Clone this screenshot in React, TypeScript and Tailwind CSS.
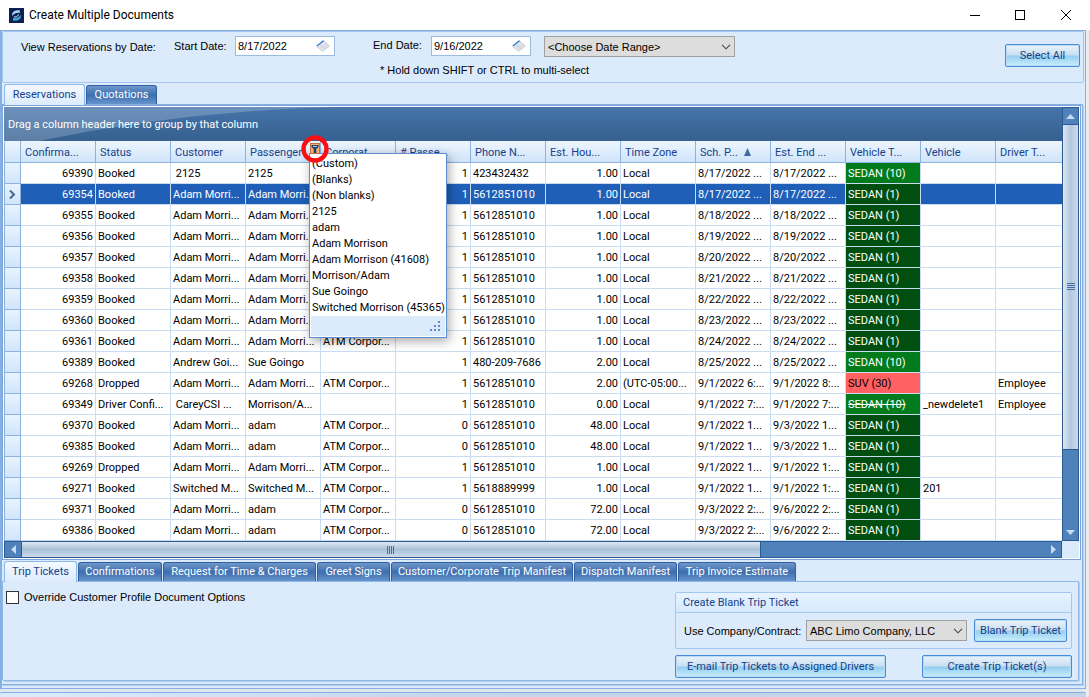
import type { ReactNode } from "react";

type Row = {
  conf: string;
  status: string;
  customer: string;
  passenger: string;
  corporate: string;
  pax: string;
  phone: string;
  hours: string;
  zone: string;
  pickup: string;
  end: string;
  type: string;
  vehicle?: string;
  driver?: string;
  strike?: boolean;
};

const ADAM = "Adam Morri...";
const ATM = "ATM Corpor...";

function row(
  conf: string,
  status: string,
  customer: string,
  passenger: string,
  corporate: string,
  pax: string,
  phone: string,
  hours: string,
  pickup: string,
  end: string,
  type: string,
  extra: Partial<Row> = {},
): Row {
  return { conf, status, customer, passenger, corporate, pax, phone, hours, zone: "Local", pickup, end, type, ...extra };
}

const daily = (conf: string, day: string, corporate = "") =>
  row(conf, "Booked", ADAM, ADAM, corporate, "1", "5612851010", "1.00", `8/${day}/2022 ...`, `8/${day}/2022 ...`, "SEDAN (1)");

const ROWS: Row[] = [
  row("69390", "Booked", "\u00a02125", "2125", "", "1", "423432432", "1.00", "8/17/2022 ...", "8/17/2022 ...", "SEDAN (10)"),
  daily("69354", "17"),
  daily("69355", "18"),
  daily("69356", "19"),
  daily("69357", "20"),
  daily("69358", "21"),
  daily("69359", "22"),
  daily("69360", "23"),
  daily("69361", "24", ATM),
  row("69389", "Booked", "Andrew Goi...", "Sue Goingo", "", "1", "480-209-7686", "2.00", "8/25/2022 ...", "8/25/2022 ...", "SEDAN (10)"),
  row("69268", "Dropped", ADAM, ADAM, ATM, "1", "5612851010", "2.00", "9/1/2022 6:...", "9/1/2022 8:...", "SUV (30)", { zone: "(UTC-05:00...", driver: "Employee" }),
  row("69349", "Driver Confi...", "\u00a0CareyCSI ...", "Morrison/A...", "", "1", "5612851010", "0.00", "9/1/2022 7:...", "9/1/2022 7:...", "SEDAN (10)", { vehicle: "_newdelete1", driver: "Employee", strike: true }),
  row("69370", "Booked", ADAM, "adam", ATM, "0", "5612851010", "48.00", "9/1/2022 1...", "9/3/2022 1...", "SEDAN (1)"),
  row("69385", "Booked", ADAM, "adam", ATM, "0", "5612851010", "48.00", "9/1/2022 1...", "9/3/2022 1...", "SEDAN (1)"),
  row("69269", "Dropped", ADAM, ADAM, ATM, "1", "5612851010", "1.00", "9/1/2022 1...", "9/1/2022 1:...", "SEDAN (1)"),
  row("69271", "Booked", "Switched M...", "Switched M...", ATM, "1", "5618889999", "1.00", "9/1/2022 1...", "9/1/2022 1:...", "SEDAN (1)", { vehicle: "201" }),
  row("69371", "Booked", ADAM, "adam", ATM, "0", "5612851010", "72.00", "9/3/2022 2:...", "9/6/2022 2:...", "SEDAN (1)"),
  row("69386", "Booked", ADAM, "adam", ATM, "0", "5612851010", "72.00", "9/3/2022 2:...", "9/6/2022 2:...", "SEDAN (1)"),
];

const TYPE_COLORS: Record<string, string> = {
  "SEDAN (10)": "bg-[#027b1d] text-white",
  "SEDAN (1)": "bg-[#004f10] text-white",
  "SUV (30)": "bg-[#ff6163] text-black",
};

const HEADERS = [
  "Confirma...", "Status", "Customer", "Passenger", "Corporat...", "# Passe...", "Phone N...", "Est. Hou...",
  "Time Zone", "Sch. P...", "Est. End ...", "Vehicle T...", "Vehicle", "Driver T...",
];

const FILTERS = [
  "(Custom)", "(Blanks)", "(Non blanks)", "2125", "adam", "Adam Morrison", "Adam Morrison (41608)",
  "Morrison/Adam", "Sue Goingo", "Switched Morrison (45365)",
];

const DOC_TABS = [
  { label: "Confirmations", width: "w-[84px]" },
  { label: "Request for Time & Charges", width: "w-[153px]" },
  { label: "Greet Signs", width: "w-[73px]" },
  { label: "Customer/Corporate Trip Manifest", width: "w-[182px]" },
  { label: "Dispatch Manifest", width: "w-[103px]" },
  { label: "Trip Invoice Estimate", width: "w-[118px]" },
];

function Tab({ active, width, children }: { active?: boolean; width: string; children: ReactNode }) {
  return (
    <button
      role="tab"
      aria-selected={!!active}
      className={`${width} shrink-0 rounded-t-[3px] border border-b-0 text-center whitespace-nowrap ${
        active
          ? "relative z-10 -mb-px h-[21px] border-[#8db8ea] bg-linear-to-b from-[#f4f9ff] to-[#dcebfc] text-[#15428b]"
          : "h-[19px] border-[#2f5f9f] bg-linear-to-b from-[#6f97ca] via-[#3e6fae] to-[#6593cc] text-white"
      }`}
    >
      {children}
    </button>
  );
}

function GlossButton({ width, children }: { width: string; children: ReactNode }) {
  return (
    <button
      className={`${width} h-[23px] shrink-0 rounded-[2px] border border-[#4a8ad4] text-center whitespace-nowrap text-[#15428b] shadow-[inset_0_0_0_1px_#b9dcf8] bg-[linear-gradient(#eaf3fb_0%,#c9dff0_48%,#94cdf0_52%,#c8effc_100%)]`}
    >
      {children}
    </button>
  );
}

function DateBox({ id, value }: { id: string; value: string }) {
  return (
    <div className="relative w-[100px] shrink-0">
      <input id={id} defaultValue={value} className="h-5 w-full border border-[#9dbbe0] bg-white px-0.5 pr-6 text-black outline-none" />
      <svg width="16" height="14" viewBox="0 0 16 14" className="pointer-events-none absolute top-[3px] right-1">
        <path d="M2 7.5 L9 2 L14.5 7 L7.5 12.5 Z" fill="#e4e7ec" stroke="#b4b9c3" strokeWidth=".6" />
        <path d="M5 9 L11.5 4.5 M7 10.5 L13 6 M5 6 L11 10" stroke="#c2c7d0" strokeWidth=".6" />
        <path d="M1.2 6.8 L8 1.2 L9.2 2 L2.2 7.6 Z" fill="#2f7be0" />
      </svg>
    </div>
  );
}

function ComboBox({ id, label, value, width }: { id: string; label?: string; value: string; width: string }) {
  return (
    <div className={`relative shrink-0 ${width}`}>
      <select id={id} aria-label={label} className="h-[21px] w-full appearance-none border border-[#a0a0a0] bg-[#dddddd] px-[3px] text-black outline-none">
        <option>{value}</option>
      </select>
      <svg width="10" height="6" viewBox="0 0 10 6" className="pointer-events-none absolute top-2 right-1" fill="none" stroke="#444" strokeWidth="1.1">
        <path d="M1 .8 L5 4.8 L9 .8" />
      </svg>
    </div>
  );
}

function TitleBar() {
  return (
    <header className="flex h-[30px] items-center bg-white pl-[9px] font-[Roboto,sans-serif] text-xs text-black">
      <svg width="15" height="15" viewBox="0 0 15 15" className="mr-[5px]">
        <rect width="15" height="15" fill="#0d1f55" />
        <path d="M10.8 2.4 C6 1.2 2 4.5 3.5 8 C4.5 6 7 4.3 10.8 5 Z" fill="#a9dcf0" />
        <path d="M4 12.4 C9 14 13.2 10.5 11.5 6.8 C10.4 9.2 8 10.6 4 9.8 Z" fill="#36a5cf" />
        <path d="M5 8.8 C6.5 9.4 8.8 8.6 9.6 6.4" stroke="#e9f8ff" fill="none" />
      </svg>
      <h1 className="flex-1">Create Multiple Documents</h1>
      <div className="flex pr-px">
        <button aria-label="Minimize" className="flex h-[30px] w-[45px] items-center justify-center">
          <svg width="10" height="10" stroke="#000"><path d="M0 5.5 H10" /></svg>
        </button>
        <button aria-label="Maximize" className="flex h-[30px] w-[46px] items-center justify-center">
          <svg width="10" height="10" fill="none" stroke="#000"><rect x=".5" y=".5" width="9" height="9" /></svg>
        </button>
        <button aria-label="Close" className="flex h-[30px] w-[46px] items-center justify-center">
          <svg width="10" height="10" stroke="#000"><path d="M0 0 L10 10 M10 0 L0 10" /></svg>
        </button>
      </div>
    </header>
  );
}

function FilterMenu() {
  return (
    <>
      <div className="absolute top-3 left-[63px] z-20 w-[138px] border border-[#5b8fcf] bg-white p-px text-black shadow-[2px_3px_10px_rgba(0,0,0,0.35)]">
        <ul className="pt-px pl-px">
          {FILTERS.map((f) => (
            <li key={f} className="h-4 leading-4 whitespace-nowrap">{f}</li>
          ))}
        </ul>
        <div className="flex h-5 items-end justify-end bg-[#dcebfc] pr-1 pb-1">
          <svg width="11" height="11" fill="#5b8ccb">
            <rect x="8" y="0" width="2" height="2" />
            <rect x="4" y="4" width="2" height="2" />
            <rect x="8" y="4" width="2" height="2" />
            <rect x="0" y="8" width="2" height="2" />
            <rect x="4" y="8" width="2" height="2" />
            <rect x="8" y="8" width="2" height="2" />
          </svg>
        </div>
      </div>
      <button aria-label="Filter passenger" className="absolute -top-[7px] left-[54px] z-30">
        <svg width="30" height="30" viewBox="0 0 30 30" fill="none">
          <rect x="10.5" y="9.5" width="9" height="10" fill="#f6b066" stroke="#c0703a" />
          <path d="M11.5 11 H18.5 V13 L16.3 15 V19 H13.7 V15 L11.5 13 Z" fill="#1e3f7d" />
          <path d="M13 12.4 H17" stroke="#b9d2f2" />
          <circle cx="15" cy="15" r="11.5" stroke="#fb0f14" strokeWidth="4.4" />
        </svg>
      </button>
    </>
  );
}

function Grid() {
  const cell = "overflow-hidden border-r border-b border-[#c9dcf1] px-[2px] pt-[2px] whitespace-nowrap";
  return (
    <table className="w-full table-fixed border-separate border-spacing-0 bg-white text-left">
      <colgroup>
        <col className="w-[17px]" />
        {HEADERS.map((h, i) => (
          <col key={h} className={i < HEADERS.length - 1 ? "w-[75px]" : ""} />
        ))}
      </colgroup>
      <thead>
        <tr className="h-[22px] text-[#15428b]">
          <th aria-label="Row marker" className="rounded-tl-[3px] border-r border-b border-l border-[#8db2dc] bg-linear-to-b from-[#eef6ff] to-[#d0e5fb] p-0" />
          {HEADERS.map((h) => (
            <th key={h} className="relative border-r border-b border-[#8db2dc] bg-linear-to-b from-[#eef6ff] to-[#cfe4fa] px-[4px] pt-[2px] pb-0 font-normal whitespace-nowrap last:border-r-0">
              {h}
              {h === "Sch. P..." && (
                <svg width="7" height="8" className="mb-[2px] ml-[6px] inline"><path d="M3.5 0 L7 8 H0 Z" fill="#3d6ba3" /></svg>
              )}
              {h === "Passenger" && <FilterMenu />}
            </th>
          ))}
        </tr>
      </thead>
      <tbody>
        {ROWS.map((r, i) => (
          <tr key={r.conf} className={`h-[21px] ${i === 1 ? "bg-[#1f5fb8] text-white" : "text-black"}`}>
            <td className="border-r border-b border-l border-[#8db2dc] bg-linear-to-b from-[#e8f3ff] to-[#d0e5fb] p-0">
              {i === 1 && (
                <svg width="7" height="9" className="mx-auto" fill="none" stroke="#46678f" strokeWidth="2"><path d="M1 .5 L5 4.5 L1 8.5" /></svg>
              )}
            </td>
            <td className={`${cell} text-right`}>{r.conf}</td>
            <td className={cell}>{r.status}</td>
            <td className={cell}>{r.customer}</td>
            <td className={cell}>{r.passenger}</td>
            <td className={cell}>{r.corporate}</td>
            <td className={`${cell} text-right`}>{r.pax}</td>
            <td className={cell}>{r.phone}</td>
            <td className={`${cell} text-right`}>{r.hours}</td>
            <td className={cell}>{r.zone}</td>
            <td className={cell}>{r.pickup}</td>
            <td className={cell}>{r.end}</td>
            <td className={`${cell} ${TYPE_COLORS[r.type]} ${r.strike ? "line-through" : ""}`}>{r.type}</td>
            <td className={cell}>{r.vehicle}</td>
            <td className={`${cell} border-r-0`}>{r.driver}</td>
          </tr>
        ))}
      </tbody>
    </table>
  );
}

function ScrollArrow({ d, label, className }: { d: string; label: string; className: string }) {
  return (
    <button aria-label={label} className={`flex shrink-0 items-center justify-center ${className}`}>
      <svg width="9" height="9" viewBox="0 0 9 9" fill="#c5dcf3"><path d={d} /></svg>
    </button>
  );
}

function GridPanel() {
  return (
    <section className="border border-[#7ba4d8] bg-white p-px">
      <div className="flex">
        <div className="min-w-0 flex-1">
          <div className="relative flex h-[34px] items-center overflow-hidden bg-linear-to-b from-[#4675ab] to-[#35608f] pt-[2px] pl-1 text-white">
            <svg width="330" height="34" className="absolute top-0 left-0">
              <path d="M0 0 H330 Q180 4 35 34 H0 Z" fill="#fff" opacity=".2" />
            </svg>
            <span className="relative">Drag a column header here to group by that column</span>
          </div>
          <Grid />
        </div>
        <div className="flex w-[17px] flex-col border border-[#2c5b93] bg-[#4f82ba]">
          <ScrollArrow label="Scroll up" d="M0 7 L4.5 2 L9 7 Z" className="h-4" />
          <div className="flex flex-[326] items-center justify-center border-y border-[#2c5b93] bg-linear-to-r from-[#dde7f2] via-[#b2c8de] to-[#cddaea]">
            <svg width="8" height="8" stroke="#46709f"><path d="M0 .5 H8 M0 2.5 H8 M0 4.5 H8 M0 6.5 H8" /></svg>
          </div>
          <div className="flex-[74]" />
          <ScrollArrow label="Scroll down" d="M0 2 L4.5 7 L9 2 Z" className="h-4" />
        </div>
      </div>
      <div className="flex bg-[#dcebfc]">
        <div className="flex h-[17px] flex-1 border border-[#2c5b93] bg-[#4f82ba]">
          <ScrollArrow label="Scroll left" d="M7 0 L2 4.5 L7 9 Z" className="w-4" />
          <div className="flex flex-[739] items-center justify-center border-x border-[#2c5b93] bg-linear-to-b from-[#dfe8f1] via-[#a9c2d8] to-[#cddaea]">
            <svg width="8" height="8" stroke="#46709f"><path d="M.5 0 V8 M2.5 0 V8 M4.5 0 V8 M6.5 0 V8" /></svg>
          </div>
          <div className="flex-[285]" />
          <ScrollArrow label="Scroll right" d="M2 0 L7 4.5 L2 9 Z" className="w-4" />
        </div>
        <div className="w-[17px]" />
      </div>
    </section>
  );
}

function DocumentPanel() {
  return (
    <section className="mr-[2px] flex items-start justify-between rounded-b-[2px] border border-[#8db8ea] bg-[#dcebfc] pt-2 pr-[6px] pb-[2px] pl-[3px] shadow-[1px_1px_0_#b4cfee]">
      <label className="flex items-center gap-[5px] font-['Liberation_Sans',sans-serif] text-black">
        <input type="checkbox" className="size-[13px] appearance-none border border-[#333] bg-white" />
        Override Customer Profile Document Options
      </label>
      <div className="w-[397px] pt-[2px]">
        <fieldset className="rounded-[2px] border border-[#a3c7ef]">
          <div className="flex h-5 items-center border-b border-[#a3c7ef] bg-linear-to-b from-[#e8f3ff] to-[#d6e9fd] pl-[7px] text-[#15428b]">
            Create Blank Trip Ticket
          </div>
          <div className="flex h-[35px] items-center justify-between pr-1 pl-2">
            <label htmlFor="company" className="font-['Liberation_Sans',sans-serif] text-black">Use Company/Contract:</label>
            <div className="flex items-center gap-[7px]">
              <div className="font-['Liberation_Sans',sans-serif]">
                <ComboBox id="company" value="ABC Limo Company, LLC" width="w-[161px]" />
              </div>
              <GlossButton width="w-[93px]">Blank Trip Ticket</GlossButton>
            </div>
          </div>
        </fieldset>
        <div className="flex justify-between pt-[6px]">
          <GlossButton width="w-[211px]">E-mail Trip Tickets to Assigned Drivers</GlossButton>
          <GlossButton width="w-[150px]">Create Trip Ticket(s)</GlossButton>
        </div>
      </div>
    </section>
  );
}

export default function App() {
  return (
    <div className="flex min-h-screen flex-col bg-[#dfe6ee] font-[Roboto,sans-serif] text-[11px] leading-[14px]">
      <TitleBar />
      <div className="flex flex-1">
        <div className="min-w-0 flex-1">
          <main className="border-t border-r border-b border-l-2 border-[#86b0e2] bg-[#dcebfc] pr-px">
            <section className="flex h-[52px] items-start rounded-[2px] border border-[#a3c7ef] pt-1 pl-[18px] font-['Liberation_Sans',sans-serif] text-black">
              <span className="w-[153px] shrink-0 pt-1">View Reservations by Date:</span>
              <label htmlFor="start" className="w-[61px] shrink-0 pt-[3px]">Start Date:</label>
              <DateBox id="start" value="8/17/2022" />
              <div className="ml-[38px]">
                <div className="flex items-start">
                  <label htmlFor="end" className="w-[58px] shrink-0 pt-[2px]">End Date:</label>
                  <DateBox id="end" value="9/16/2022" />
                  <div className="ml-[13px]">
                    <ComboBox id="range" label="Date range" value="<Choose Date Range>" width="w-[191px]" />
                  </div>
                </div>
                <p className="pt-[6px] pl-[7px]">* Hold down SHIFT or CTRL to multi-select</p>
              </div>
              <div className="ml-auto pt-2 pr-[3px] font-[Roboto,sans-serif]">
                <GlossButton width="w-[75px]">Select All</GlossButton>
              </div>
            </section>
            <div role="tablist" className="flex h-[21px] items-end gap-px pl-[2px]">
              <Tab active width="w-[81px]">Reservations</Tab>
              <Tab width="w-[71px]">Quotations</Tab>
            </div>
            <div className="mr-px border-t border-r border-b border-[#86b0e2] pr-px pb-[3px] shadow-[1px_1px_0_#b4cfee]">
              <GridPanel />
              <div role="tablist" className="flex h-[21px] items-end gap-px pl-[2px]">
                <Tab active width="w-[73px]">Trip Tickets</Tab>
                {DOC_TABS.map((t) => (
                  <Tab key={t.label} width={t.width}>{t.label}</Tab>
                ))}
              </div>
              <DocumentPanel />
            </div>
            <div className="h-[3px]" />
          </main>
          <div className="mt-[3px] h-[5px] rounded-t-[2px] border-t border-[#86b0e2] bg-linear-to-r from-[#dcebfc] via-[#c3d3e8] to-[#c3d3e8]" />
        </div>
        <div className="w-[4px] border-r border-[#c5d3e4] bg-[#ececee]" />
      </div>
    </div>
  );
}
